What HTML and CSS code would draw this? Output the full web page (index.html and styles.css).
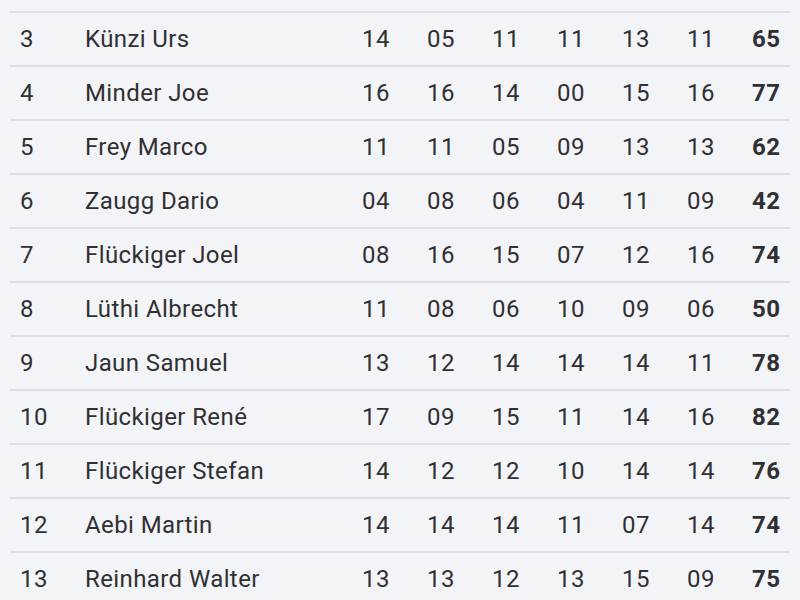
FILE: index.html
```html
<!DOCTYPE html>
<html lang="de">
<head>
<meta charset="utf-8">
<title>Rangliste</title>
<link rel="stylesheet" href="styles.css">
</head>
<body>
<div class="table">
  <div class="row"><span>3</span><span>Künzi Urs</span><span>14</span><span>05</span><span>11</span><span>11</span><span>13</span><span>11</span><span class="total">65</span></div>
  <div class="row"><span>4</span><span>Minder Joe</span><span>16</span><span>16</span><span>14</span><span>00</span><span>15</span><span>16</span><span class="total">77</span></div>
  <div class="row"><span>5</span><span>Frey Marco</span><span>11</span><span>11</span><span>05</span><span>09</span><span>13</span><span>13</span><span class="total">62</span></div>
  <div class="row"><span>6</span><span>Zaugg Dario</span><span>04</span><span>08</span><span>06</span><span>04</span><span>11</span><span>09</span><span class="total">42</span></div>
  <div class="row"><span>7</span><span>Flückiger Joel</span><span>08</span><span>16</span><span>15</span><span>07</span><span>12</span><span>16</span><span class="total">74</span></div>
  <div class="row"><span>8</span><span>Lüthi Albrecht</span><span>11</span><span>08</span><span>06</span><span>10</span><span>09</span><span>06</span><span class="total">50</span></div>
  <div class="row"><span>9</span><span>Jaun Samuel</span><span>13</span><span>12</span><span>14</span><span>14</span><span>14</span><span>11</span><span class="total">78</span></div>
  <div class="row"><span>10</span><span>Flückiger René</span><span>17</span><span>09</span><span>15</span><span>11</span><span>14</span><span>16</span><span class="total">82</span></div>
  <div class="row"><span>11</span><span>Flückiger Stefan</span><span>14</span><span>12</span><span>12</span><span>10</span><span>14</span><span>14</span><span class="total">76</span></div>
  <div class="row"><span>12</span><span>Aebi Martin</span><span>14</span><span>14</span><span>14</span><span>11</span><span>07</span><span>14</span><span class="total">74</span></div>
  <div class="row"><span>13</span><span>Reinhard Walter</span><span>13</span><span>13</span><span>12</span><span>13</span><span>15</span><span>09</span><span class="total">75</span></div>
</div>
</body>
</html>
```
FILE: styles.css
```css
html, body {
  margin: 0;
  padding: 0;
  background: #f3f4f8;
  height: 100%;
  overflow: hidden;
}
body {
  font-family: Roboto, "Noto Sans", sans-serif;
  font-size: 24px;
  letter-spacing: 0.4px;
  color: #303033;
}
.table {
  padding: 11px 10px 0 10px;
}
.row {
  display: grid;
  grid-template-columns: 65px 277px repeat(6, 65px) 1fr;
  align-items: center;
  height: 52px;
  padding-left: 10px;
  border-top: 2px solid #dddde7;
  line-height: 1;
}
.total {
  font-weight: 700;
}
```
